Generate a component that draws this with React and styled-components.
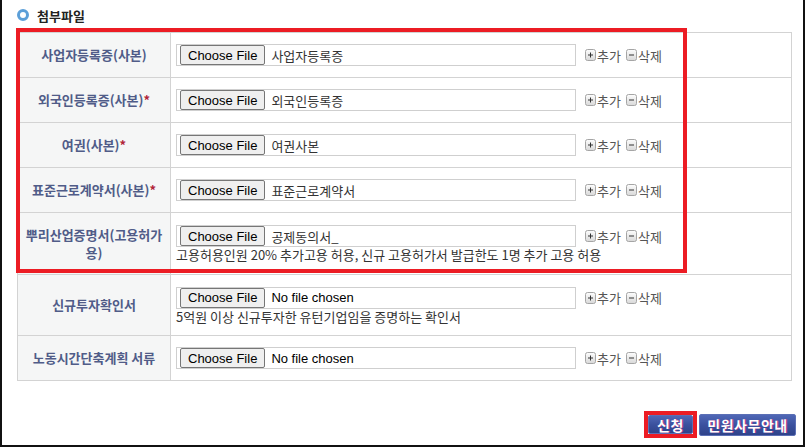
import React from 'react';
import styled, { createGlobalStyle } from 'styled-components';

const GlobalStyle = createGlobalStyle`
  html, body {
    margin: 0;
    padding: 0;
    background: #fff;
  }
  body {
    font-family: "Noto Sans CJK KR", "Noto Sans", sans-serif;
    font-size: 13px;
    color: #333;
  }
`;

const Frame = styled.div`
  position: relative;
  box-sizing: border-box;
  width: 805px;
  height: 447px;
  border: 2px solid #111;
  border-top: none;
  padding: 7px 11px 0 15px;
  overflow: hidden;
`;

const Heading = styled.h3`
  display: flex;
  align-items: center;
  gap: 8px;
  margin: 0;
  height: 16px;
  font-size: 13px;
  font-weight: 700;
  color: #222;
`;

const Bullet = styled.span`
  box-sizing: border-box;
  width: 12px;
  height: 12px;
  border-radius: 50%;
  border: 3.5px solid #5c9fd8;
  background: #fff;
`;

const TableWrap = styled.div`
  position: relative;
  margin-top: 9px;
`;

const Highlight = styled.div`
  position: absolute;
  box-sizing: border-box;
  border: 4px solid #ec1c24;
  pointer-events: none;
  left: ${p => p.$left}px;
  top: ${p => p.$top}px;
  width: ${p => p.$width};
  height: ${p => p.$height};
`;

const Table = styled.table`
  width: 100%;
  border-collapse: collapse;
  table-layout: fixed;
`;

const LabelCell = styled.th`
  width: 153px;
  height: ${p => p.$h}px;
  box-sizing: border-box;
  padding: 0 6px;
  border: 1px solid #d3d3d3;
  background: #f5f6f6;
  color: #505c88;
  font-size: 13px;
  font-weight: 700;
  line-height: 18px;
  text-align: center;
  vertical-align: middle;
`;

const Star = styled.span`
  color: #b0243a;
`;

const ValueCell = styled.td`
  box-sizing: border-box;
  height: ${p => p.$h}px;
  padding: 0 5px;
  border: 1px solid #d3d3d3;
  vertical-align: middle;
`;

const FileRow = styled.div`
  display: flex;
  align-items: center;
  gap: 9px;
`;

const FileBox = styled.div`
  box-sizing: border-box;
  display: flex;
  align-items: center;
  gap: 6px;
  width: 400px;
  height: 22px;
  padding: 0 3px;
  border: 1px solid #cfcfcf;
  background: #fff;
`;

const ChooseButton = styled.span`
  box-sizing: border-box;
  display: inline-flex;
  align-items: center;
  height: 20px;
  padding: 0 7px;
  border: 1px solid #767676;
  border-radius: 2px;
  background: #efefef;
  color: #000;
  font-family: "Liberation Sans", Arial, sans-serif;
  font-size: 13px;
`;

const FileName = styled.span`
  font-family: ${p => (p.$latin ? '"Liberation Sans", Arial, sans-serif' : '"Noto Sans CJK KR", sans-serif')};
  font-size: 13px;
  color: ${p => (p.$latin ? '#000' : '#333')};
  white-space: nowrap;
`;

const Actions = styled.div`
  display: flex;
  align-items: center;
  gap: 5px;
`;

const ActionLink = styled.span`
  display: inline-flex;
  align-items: center;
  gap: 1px;
  color: #555;
  font-size: 13px;
`;

const Desc = styled.div`
  margin-top: 1px;
  font-size: 13px;
  line-height: 14px;
  color: #333;
  white-space: nowrap;
`;

const ButtonBar = styled.div`
  display: flex;
  justify-content: flex-end;
  align-items: center;
  gap: 6px;
  margin-top: 33px;
  margin-right: -4px;
`;

const Spot = styled.div`
  position: relative;
`;

const BlueButton = styled.button`
  box-sizing: border-box;
  height: ${p => p.$h}px;
  width: ${p => p.$w}px;
  padding: 0;
  border: 1px solid #5b6fb5;
  border-radius: 2px;
  background: linear-gradient(#4f67b6 0%, #3b519e 50%, #2f438a 100%);
  color: #fff;
  font-family: "Noto Sans CJK KR", sans-serif;
  font-size: 14px;
  font-weight: 700;
  line-height: 1;
  letter-spacing: 0.5px;
  text-shadow: 1px 0 0 #b03a8a;
`;

const SmallIcon = ({ minus }) => (
  <svg width="11" height="12" viewBox="0 0 11 12">
    <defs>
      <linearGradient id="sg" x1="0" y1="0" x2="0" y2="1">
        <stop offset="0" stopColor="#fdfdfd" />
        <stop offset="1" stopColor="#d8d8d8" />
      </linearGradient>
    </defs>
    <rect x="0.5" y="0.5" width="10" height="11" rx="2" fill="url(#sg)" stroke="#a5a5a5" />
    <path d="M3 6h5" stroke="#333" strokeWidth="1" />
    {!minus && <path d="M5.5 3.5v5" stroke="#333" strokeWidth="1" />}
  </svg>
);

const rows = [
  { label: '사업자등록증(사본)', file: '사업자등록증', h: 45 },
  { label: '외국인등록증(사본)', star: true, file: '외국인등록증', h: 45 },
  { label: '여권(사본)', star: true, file: '여권사본', h: 45 },
  { label: '표준근로계약서(사본)', star: true, file: '표준근로계약서', h: 45 },
  {
    label: '뿌리산업증명서(고용허가용)',
    file: '공제동의서_',
    desc: '고용허용인원 20% 추가고용 허용, 신규 고용허가서 발급한도 1명 추가 고용 허용',
    h: 62,
  },
  { label: '신규투자확인서', desc: '5억원 이상 신규투자한 유턴기업임을 증명하는 확인서', h: 61 },
  { label: '노동시간단축계획 서류', h: 45 },
];

export default function App() {
  return (
    <>
      <GlobalStyle />
      <Frame>
        <Heading>
          <Bullet />
          첨부파일
        </Heading>
        <TableWrap>
          <Table>
            <tbody>
              {rows.map(r => (
                <tr key={r.label}>
                  <LabelCell $h={r.h}>
                    {r.label}
                    {r.star && <Star>*</Star>}
                  </LabelCell>
                  <ValueCell $h={r.h}>
                    <FileRow>
                      <FileBox>
                        <ChooseButton>Choose File</ChooseButton>
                        {r.file ? (
                          <FileName>{r.file}</FileName>
                        ) : (
                          <FileName $latin>No file chosen</FileName>
                        )}
                      </FileBox>
                      <Actions>
                        <ActionLink>
                          <SmallIcon />
                          추가
                        </ActionLink>
                        <ActionLink>
                          <SmallIcon minus />
                          삭제
                        </ActionLink>
                      </Actions>
                    </FileRow>
                    {r.desc && <Desc>{r.desc}</Desc>}
                  </ValueCell>
                </tr>
              ))}
            </tbody>
          </Table>
          <Highlight $left={-1} $top={-4} $width="671px" $height="245px" />
        </TableWrap>
        <ButtonBar>
          <Spot>
            <BlueButton $w={45} $h={19}>신청</BlueButton>
            <Highlight $left={-4} $top={-4} $width="53px" $height="27px" />
          </Spot>
          <BlueButton $w={97} $h={22}>민원사무안내</BlueButton>
        </ButtonBar>
      </Frame>
    </>
  );
}
